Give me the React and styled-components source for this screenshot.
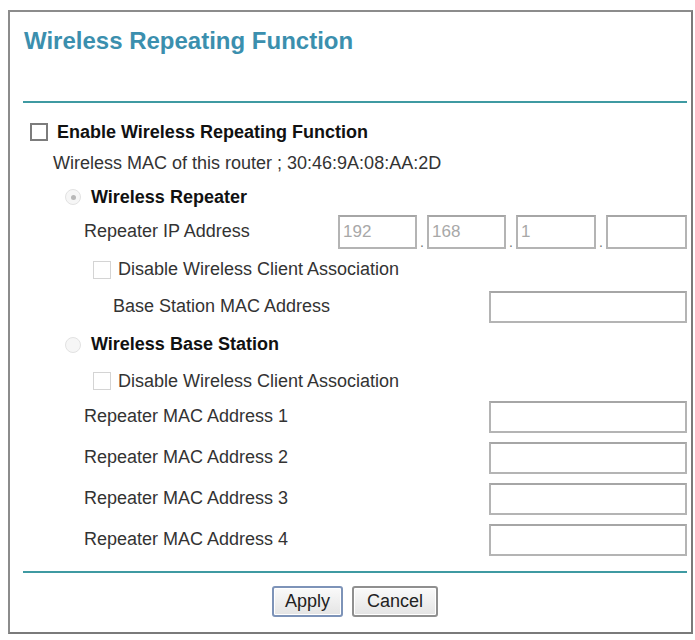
import React from 'react'
import styled, { createGlobalStyle } from 'styled-components'

const Global = createGlobalStyle`
  body {
    margin: 0;
    background: #fff;
    font-family: "Liberation Sans", Arial, sans-serif;
  }
`

const Frame = styled.div`
  box-sizing: border-box;
  width: 685px;
  height: 624px;
  margin: 10px 0 0 8px;
  border: 2px solid #8c8c8c;
  border-right-color: #7a7a7a;
  border-bottom-color: #7a7a7a;
  display: flex;
  flex-direction: column;
  padding-right: 4px;
`

const Title = styled.h1`
  margin: 15px 0 0 14px;
  font-size: 24px;
  line-height: 28px;
  font-weight: bold;
  color: #3b8fae;
`

const Rule = styled.div`
  height: 2px;
  background: #3f9aa2;
  margin: ${({ $top }) => $top}px 0 0 13px;
`

const Row = styled.div`
  display: flex;
  align-items: center;
  height: ${({ $h }) => $h}px;
  padding-left: ${({ $indent }) => $indent}px;
  justify-content: ${({ $spread }) => ($spread ? 'space-between' : 'flex-start')};
  margin-top: ${({ $top }) => $top || 0}px;
`

const Label = styled.span`
  font-size: 18px;
  color: ${({ $bold }) => ($bold ? '#111' : '#333')};
  font-weight: ${({ $bold }) => ($bold ? 'bold' : 'normal')};
  white-space: nowrap;
`

const Check = styled.span`
  box-sizing: border-box;
  width: 18px;
  height: 18px;
  margin-right: ${({ $gap }) => $gap}px;
  border: ${({ $off }) => ($off ? '1px solid #d4d4d4' : '2px solid #7c7c7c')};
  background: #fff;
  flex: none;
`

const Radio = styled.span`
  box-sizing: border-box;
  width: 16px;
  height: 16px;
  border-radius: 50%;
  border: 1px solid #e2e2e2;
  background: #f6f6f6;
  margin-right: 10px;
  display: flex;
  align-items: center;
  justify-content: center;
  flex: none;

  &::after {
    content: '';
    width: 5px;
    height: 5px;
    border-radius: 50%;
    background: ${({ $on }) => ($on ? '#b8b8b8' : 'transparent')};
  }
`

const Field = styled.div`
  box-sizing: border-box;
  width: ${({ $w }) => $w}px;
  height: ${({ $h }) => $h || 32}px;
  border: 2px solid #b4b4b4;
  border-top-color: #a6a6a6;
  background: #fff;
  font-size: 17px;
  color: #a8a8a8;
  padding-left: 3px;
  display: flex;
  align-items: center;
`

const IpGroup = styled.div`
  display: flex;
  align-items: flex-end;
`

const Dot = styled.span`
  width: 10px;
  text-align: center;
  font-size: 14px;
  line-height: 14px;
  color: #777;
`

const Buttons = styled.div`
  display: flex;
  justify-content: center;
  gap: 9px;
  margin-top: 13px;
  padding-left: 13px;
`

const Button = styled.button`
  box-sizing: border-box;
  height: 31px;
  padding: 0 ${({ $primary }) => ($primary ? 11 : 13)}px;
  font-family: "Liberation Sans", Arial, sans-serif;
  font-size: 18px;
  color: #222;
  background: linear-gradient(#fafafa, #e4e4e4);
  border: 2px solid ${({ $primary }) => ($primary ? '#7d93b8' : '#8f8f8f')};
  border-radius: 3px;
  box-shadow: inset 0 0 0 1px #fff;
`

const macRows = [1, 2, 3, 4]

export default function App() {
  return (
    <>
      <Global />
      <Frame>
        <Title>Wireless Repeating Function</Title>
        <Rule $top={46} />

        <Row $h={28} $indent={20} $top={15}>
          <Check $gap={9} />
          <Label $bold>Enable Wireless Repeating Function</Label>
        </Row>
        <Row $h={34} $indent={43}>
          <Label>Wireless MAC of this router ; 30:46:9A:08:AA:2D</Label>
        </Row>
        <Row $h={34} $indent={55}>
          <Radio $on />
          <Label $bold>Wireless Repeater</Label>
        </Row>
        <Row $h={35} $indent={74} $spread>
          <Label>Repeater IP Address</Label>
          <IpGroup>
            <Field $w={79} $h={34}>192</Field>
            <Dot>.</Dot>
            <Field $w={79} $h={34}>168</Field>
            <Dot>.</Dot>
            <Field $w={80} $h={34}>1</Field>
            <Dot>.</Dot>
            <Field $w={81} $h={34} />
          </IpGroup>
        </Row>
        <Row $h={41} $indent={83}>
          <Check $off $gap={7} />
          <Label>Disable Wireless Client Association</Label>
        </Row>
        <Row $h={33} $indent={103} $spread>
          <Label>Base Station MAC Address</Label>
          <Field $w={198} />
        </Row>
        <Row $h={43} $indent={55}>
          <Radio />
          <Label $bold>Wireless Base Station</Label>
        </Row>
        <Row $h={30} $indent={83}>
          <Check $off $gap={7} />
          <Label>Disable Wireless Client Association</Label>
        </Row>
        {macRows.map((n) => (
          <Row key={n} $h={41} $indent={74} $spread>
            <Label>Repeater MAC Address {n}</Label>
            <Field $w={198} />
          </Row>
        ))}

        <Rule $top={11} />
        <Buttons>
          <Button $primary>Apply</Button>
          <Button>Cancel</Button>
        </Buttons>
      </Frame>
    </>
  )
}
